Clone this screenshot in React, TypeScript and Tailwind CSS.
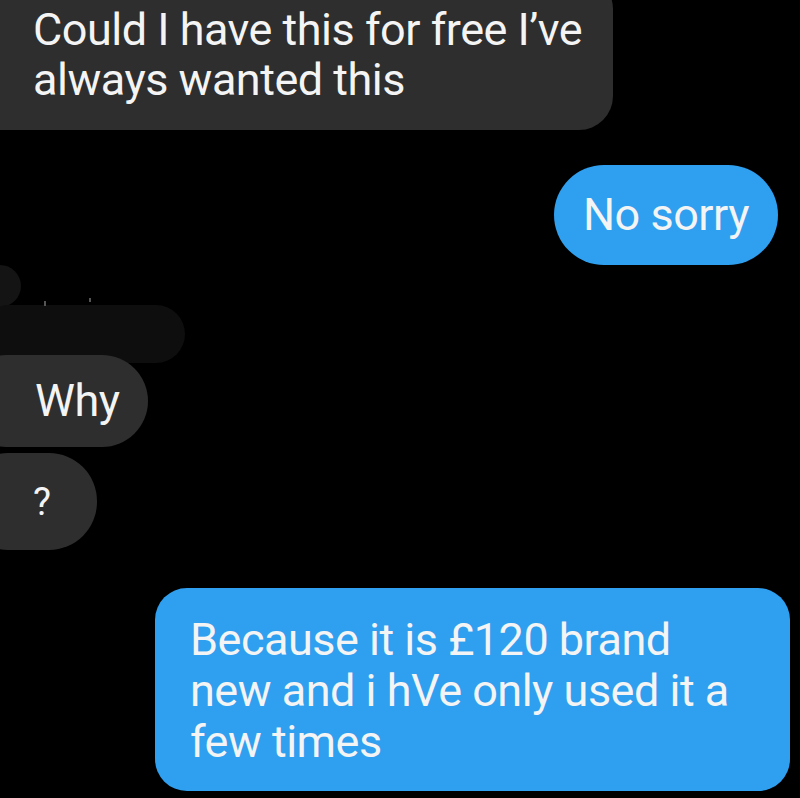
import React from 'react';

const font = { fontFamily: 'Roboto, "Liberation Sans", sans-serif' };

export default function App() {
  return (
    <div
      className="w-[800px] h-[798px] bg-black overflow-hidden flex flex-col text-[#f4f4f4] text-[45px] leading-[50px]"
      style={font}
    >
      {/* incoming: first message */}
      <div className="self-start -mt-[25px] -ml-[40px] pl-[73px] pr-[31px] pt-[30px] pb-[25px] bg-[#2e2e2e] rounded-[34px] tracking-[-0.5px] whitespace-nowrap">
        Could I have this for free I’ve
        <br />
        always wanted this
      </div>

      {/* outgoing */}
      <div className="self-end mt-[35px] mr-[22px] h-[100px] px-[29px] flex items-center rounded-full bg-[#2f9ff0] tracking-[-0.5px]">
        No sorry
      </div>

      {/* scribbled-out area */}
      <div className="relative h-[90px] shrink-0">
        <div className="absolute -left-[25px] top-0 w-[46px] h-[42px] rounded-full bg-[#141414]" />
        <div className="absolute -left-[20px] top-[40px] w-[205px] h-[58px] rounded-full bg-[#0e0e0e]" />
        <div className="absolute left-[44px] top-[36px] w-[2px] h-[5px] bg-[#555]" />
        <div className="absolute left-[89px] top-[33px] w-[2px] h-[4px] bg-[#555]" />
      </div>

      {/* incoming: Why */}
      <div className="self-start -ml-[40px] pl-[75px] pr-[28px] h-[92px] flex items-center rounded-[46px] bg-[#2e2e2e] relative tracking-[-0.5px]">
        Why
      </div>

      {/* incoming: ? */}
      <div className="self-start mt-[6px] -ml-[40px] pl-[73px] pr-[46px] h-[97px] flex items-center rounded-[48px] bg-[#2e2e2e] text-[38px]">
        ?
      </div>

      {/* outgoing: long reply */}
      <div className="self-end mt-[38px] mr-[10px] w-[635px] pl-[35px] pr-[20px] pt-[26px] pb-[24px] rounded-[32px] bg-[#2f9ff0] tracking-[-0.5px] leading-[51px] whitespace-nowrap">
        Because it is £120 brand
        <br />
        new and i hVe only used it a
        <br />
        few times
      </div>
    </div>
  );
}
